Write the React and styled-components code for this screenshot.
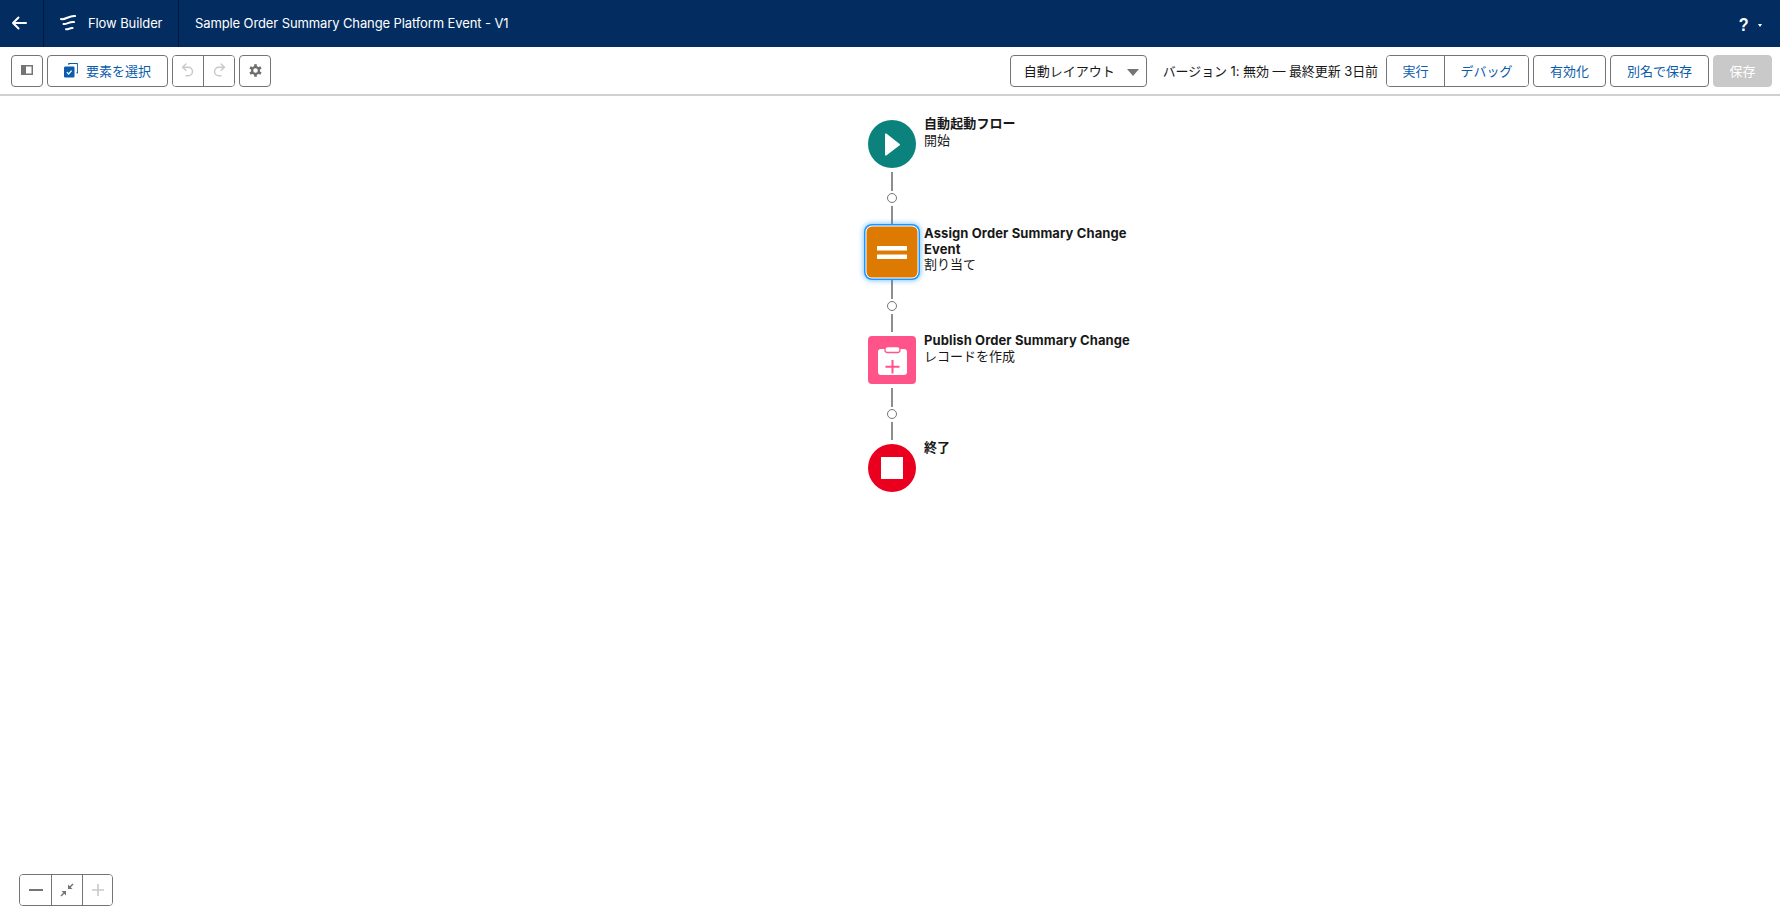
import React from "react";
import styled, { createGlobalStyle } from "styled-components";

const Global = createGlobalStyle`
  html, body { margin: 0; padding: 0; background: #fff; }
  body { font-family: Inter, "Noto Sans CJK JP", sans-serif; color: #181818; }
  * { box-sizing: border-box; }
`;

const Page = styled.div`
  width: 1780px;
  height: 920px;
  display: flex;
  flex-direction: column;
  overflow: hidden;
  position: relative;
`;

const Header = styled.header`
  height: 47px;
  flex: none;
  background: #032d60;
  color: #fff;
  display: flex;
  align-items: stretch;
`;

const HeaderCell = styled.div`
  display: flex;
  align-items: center;
  width: ${(p) => p.$w}px;
  padding-left: ${(p) => p.$pl}px;
  padding-bottom: 2px;
  gap: ${(p) => p.$gap || 0}px;
  flex: none;
  border-right: 1px solid #001a3d;
`;

const Title = styled.div`
  font-size: 13px;
  margin-left: 16px;
  padding-bottom: 2px;
  letter-spacing: -0.11px;
  flex: 1;
  align-self: center;
`;

const BrandText = styled.span`
  font-size: 13px;
  letter-spacing: -0.1px;
`;

const HelpBox = styled.div`
  display: flex;
  align-items: center;
  gap: 8px;
  padding-right: 18px;
  padding-top: 3px;
`;

const HelpMark = styled.span`
  font-family: "Liberation Sans", sans-serif;
  font-size: 19px;
  font-weight: 700;
  line-height: 20px;
  transform: scaleX(0.85);
`;

const Caret = styled.span`
  width: 0;
  height: 0;
  border-left: 2.5px solid transparent;
  border-right: 2.5px solid transparent;
  border-top: 3px solid #fff;
`;

const Toolbar = styled.div`
  height: 49px;
  flex: none;
  border-bottom: 2px solid #d0d0d0;
  display: flex;
  align-items: flex-start;
  padding: 8px 8px 0 11px;
  justify-content: space-between;
`;

const ToolGroup = styled.div`
  display: flex;
  align-items: center;
  gap: ${(p) => p.$gap}px;
`;

const Btn = styled.button`
  height: 32px;
  width: ${(p) => p.$w}px;
  flex: none;
  border: 1px solid #747474;
  border-radius: 4px;
  background: #fff;
  color: #0b5cab;
  font-family: inherit;
  font-size: 13px;
  display: inline-flex;
  align-items: center;
  justify-content: center;
  gap: ${(p) => p.$gap || 0}px;
  padding: 0 0 2px;
  &:disabled {
    background: #c9c9c9;
    border-color: #c9c9c9;
    color: #fff;
  }
`;

const Joined = styled.div`
  display: flex;
  height: 32px;
  border: 1px solid #747474;
  border-radius: 4px;
  overflow: hidden;
  flex: none;
`;

const JoinedBtn = styled.button`
  width: ${(p) => p.$w}px;
  height: 30px;
  border: 0;
  background: #fff;
  color: #0b5cab;
  font-family: inherit;
  font-size: 13px;
  padding: 0 0 2px;
  display: inline-flex;
  align-items: center;
  justify-content: center;
  & + & { border-left: 1px solid #747474; }
`;

const LayoutSelect = styled.div`
  width: 137px;
  height: 32px;
  border: 1px solid #747474;
  border-radius: 4px;
  display: flex;
  align-items: center;
  justify-content: space-between;
  padding: 0 7px 2px 13px;
  font-size: 13px;
  color: #181818;
  margin-right: 12px;
  flex: none;
`;

const SelectArrow = styled.span`
  width: 0;
  height: 0;
  border-left: 6px solid transparent;
  border-right: 6px solid transparent;
  border-top: 7px solid #747474;
  margin-top: 4px;
`;

const Status = styled.span`
  font-size: 13px;
  color: #181818;
  margin-right: 4px;
  padding-bottom: 2px;
  letter-spacing: -0.08px;
  white-space: nowrap;
`;

const Canvas = styled.main`
  flex: 1;
  display: flex;
  flex-direction: column;
  align-items: flex-start;
  padding: 24px 0 0 868px;
`;

const NodeRow = styled.div`
  position: relative;
  width: 48px;
  height: 48px;
  flex: none;
`;

const Shape = styled.div`
  width: 48px;
  height: 48px;
  background: ${(p) => p.$bg};
  border-radius: ${(p) => (p.$round ? "50%" : "4px")};
  display: flex;
  align-items: center;
  justify-content: center;
  ${(p) =>
    p.$selected &&
    `box-shadow: 0 0 0 1.5px #dd7a01, 0 0 0 2.5px #fff, 0 0 0 4px #1b96ff, 0 0 5px 5px rgba(27,150,255,.5);`}
`;

const Label = styled.div`
  position: absolute;
  left: 56px;
  top: -4px;
  width: 216px;
  font-size: 13px;
  line-height: 16px;
  color: #181818;
`;

const LabelTitle = styled.div`
  font-weight: 700;
  letter-spacing: 0.1px;
  position: relative;
  top: ${(p) => p.$nudge}px;
`;

const LabelSub = styled.div`
  font-weight: 400;
`;

const Connector = styled.div`
  width: 48px;
  height: 60px;
  flex: none;
  display: flex;
  flex-direction: column;
  align-items: center;
`;

const Line = styled.div`
  width: 2px;
  height: ${(p) => p.$h}px;
  margin-top: ${(p) => p.$mt}px;
  background: #8e8e8e;
`;

const Dot = styled.div`
  width: 10px;
  height: 10px;
  border-radius: 50%;
  border: 1px solid #747474;
  background: #fff;
  margin-top: 2px;
`;

const Zoom = styled.div`
  position: absolute;
  left: 19px;
  top: 874px;
  display: flex;
  height: 32px;
  border: 1px solid #747474;
  border-radius: 4px;
  overflow: hidden;
`;

const ZoomBtn = styled.div`
  width: ${(p) => p.$w}px;
  height: 30px;
  display: flex;
  align-items: center;
  justify-content: center;
  background: #fff;
  & + & { border-left: 1px solid #747474; }
`;

const BackArrow = () => (
  <svg width="16" height="14" viewBox="0 0 16 14" fill="none" stroke="#fff" strokeWidth="2" strokeLinecap="round" strokeLinejoin="round">
    <path d="M15 7H2M7.5 1.5 2 7l5.500 5.500" />
  </svg>
);

const FlowLogo = () => (
  <svg width="16" height="17" viewBox="0 0 16 17" fill="none" stroke="#fff" strokeWidth="2" strokeLinecap="round">
    <path d="M1 5C5 6.2 9.5 1.2 15 2" />
    <path d="M3.5 10C6.5 10.800 9.5 7.2 14 8" />
    <path d="M6 15.300C8 15.800 10 13.600 12.5 14" />
  </svg>
);

const PanelIcon = () => (
  <svg width="12" height="10" viewBox="0 0 12 10">
    <rect x="0" y="0" width="12" height="10" fill="#747474" />
    <rect x="5" y="1.5" width="5.5" height="7" fill="#fff" />
  </svg>
);

const SelectIcon = () => (
  <svg width="14" height="15" viewBox="0 0 14 15">
    <path d="M4.5 1.6A1.4 1.4 0 0 1 5.9 .4h6.4A1.5 1.5 0 0 1 13.8 2v6.6a1.4 1.4 0 0 1-1.2 1.4" fill="none" stroke="#0b5cab" strokeWidth="1.3" />
    <rect x="0" y="3.5" width="10.5" height="11" rx="1.3" fill="#0b5cab" />
    <path d="M2.8 9.2l1.8 1.8 3-3.4" fill="none" stroke="#fff" strokeWidth="1.2" />
  </svg>
);

const UndoIcon = ({ flip }) => (
  <svg width="14" height="14" viewBox="0 0 14 14" fill="none" stroke="#c9c9c9" strokeWidth="1.5" strokeLinecap="round" strokeLinejoin="round" transform={flip ? "scale(-1 1)" : undefined}>
    <path d="M4.8 1 1.6 4.2l3.2 3" />
    <path d="M2 4.2h5.2a4.3 4.3 0 0 1 0 8.6H5" />
  </svg>
);

const GearIcon = () => (
  <svg width="13" height="13" viewBox="0 0 13 13">
    <g stroke="#706e6b" fill="none">
      <circle cx="6.5" cy="6.5" r="3.4" strokeWidth="2.2" />
      {[0, 60, 120, 180, 240, 300].map((a) => (
        <path key={a} d="M6.5 0.2V3" strokeWidth="2.6" transform={`rotate(${a} 6.5 6.5)`} />
      ))}
    </g>
  </svg>
);

const PlayIcon = () => (
  <svg width="16" height="23" viewBox="0 0 16 23">
    <path d="M1 1.2v20.6a.8.8 0 0 0 1.3.6l13-9.9a1 1 0 0 0 0-1.7L2.3.6A.8.8 0 0 0 1 1.2z" fill="#fff" />
  </svg>
);

const EqualsIcon = () => (
  <svg width="30" height="13" viewBox="0 0 30 13">
    <rect x="0" y="0" width="30" height="4.5" rx=".6" fill="#fff" />
    <rect x="0" y="8.5" width="30" height="4.5" rx=".6" fill="#fff" />
  </svg>
);

const RecordCreateIcon = () => (
  <svg width="29" height="29" viewBox="0 0 29 29">
    <rect x="0" y="3" width="29" height="26" rx="3" fill="#fff" />
    <rect x="7" y="0.5" width="15" height="6" rx="2.5" fill="#fff" stroke="#ff538a" strokeWidth="1.3" />
    <path d="M14.5 14v13.500M7.5 20.750h14" stroke="#ff538a" strokeWidth="2" fill="none" />
  </svg>
);

const StopIcon = () => (
  <svg width="22" height="22" viewBox="0 0 22 22">
    <rect width="22" height="22" fill="#fff" />
  </svg>
);

const MinusIcon = () => (
  <svg width="14" height="2" viewBox="0 0 14 2">
    <rect width="14" height="2" fill="#747474" />
  </svg>
);

const FitIcon = () => (
  <svg width="14" height="14" viewBox="0 0 14 14" fill="#747474" stroke="#747474">
    <path d="M13 1 9.5 4.5" strokeWidth="1.5" />
    <path d="M8 1.5V6h4.5z" stroke="none" />
    <path d="M1 13l3.500-3.500" strokeWidth="1.5" />
    <path d="M1.5 8H6v4.500z" stroke="none" />
  </svg>
);

const PlusIcon = () => (
  <svg width="14" height="14" viewBox="0 0 14 14">
    <path d="M7 1v12M1 7h12" stroke="#c9c9c9" strokeWidth="1.6" />
  </svg>
);

const Link = () => (
  <Connector>
    <Line $h={19} $mt={4} />
    <Dot />
    <Line $h={18} $mt={3} />
  </Connector>
);

const nodes = [
  { key: "start", bg: "#0b827c", round: true, icon: <PlayIcon />, title: "自動起動フロー", sub: "開始", nudge: -1 },
  { key: "assign", bg: "#dd7a01", selected: true, icon: <EqualsIcon />, title: "Assign Order Summary Change Event", sub: "割り当て", nudge: 1 },
  { key: "create", bg: "#ff538a", icon: <RecordCreateIcon />, title: "Publish Order Summary Change", sub: "レコードを作成", nudge: 0 },
  { key: "end", bg: "#ea001e", round: true, icon: <StopIcon />, title: "終了", nudge: -1 },
];

export default function App() {
  return (
    <Page>
      <Global />
      <Header>
        <HeaderCell $w={44} $pl={11}>
          <BackArrow />
        </HeaderCell>
        <HeaderCell $w={135} $pl={16} $gap={12}>
          <FlowLogo />
          <BrandText>Flow Builder</BrandText>
        </HeaderCell>
        <Title>Sample Order Summary Change Platform Event - V1</Title>
        <HelpBox>
          <HelpMark>?</HelpMark>
          <Caret />
        </HelpBox>
      </Header>
      <Toolbar>
        <ToolGroup $gap={4}>
          <Btn $w={32} aria-label="パネル">
            <PanelIcon />
          </Btn>
          <Btn $w={121} $gap={8}>
            <SelectIcon />
            要素を選択
          </Btn>
          <Joined>
            <JoinedBtn $w={30} aria-label="元に戻す"><UndoIcon /></JoinedBtn>
            <JoinedBtn $w={31} aria-label="やり直し"><UndoIcon flip /></JoinedBtn>
          </Joined>
          <Btn $w={32} aria-label="設定">
            <GearIcon />
          </Btn>
        </ToolGroup>
        <ToolGroup $gap={4}>
          <LayoutSelect>
            自動レイアウト
            <SelectArrow />
          </LayoutSelect>
          <Status>バージョン 1: 無効 — 最終更新 3日前</Status>
          <Joined>
            <JoinedBtn $w={57}>実行</JoinedBtn>
            <JoinedBtn $w={84}>デバッグ</JoinedBtn>
          </Joined>
          <Btn $w={73}>有効化</Btn>
          <Btn $w={99}>別名で保存</Btn>
          <Btn $w={59} disabled>保存</Btn>
        </ToolGroup>
      </Toolbar>
      <Canvas>
        {nodes.map((n, i) => (
          <React.Fragment key={n.key}>
            <NodeRow>
              <Shape $bg={n.bg} $round={n.round} $selected={n.selected}>
                {n.icon}
              </Shape>
              <Label>
                <LabelTitle $nudge={n.nudge}>{n.title}</LabelTitle>
                {n.sub && <LabelSub>{n.sub}</LabelSub>}
              </Label>
            </NodeRow>
            {i < nodes.length - 1 && <Link />}
          </React.Fragment>
        ))}
      </Canvas>
      <Zoom>
        <ZoomBtn $w={31}><MinusIcon /></ZoomBtn>
        <ZoomBtn $w={31}><FitIcon /></ZoomBtn>
        <ZoomBtn $w={30}><PlusIcon /></ZoomBtn>
      </Zoom>
    </Page>
  );
}
